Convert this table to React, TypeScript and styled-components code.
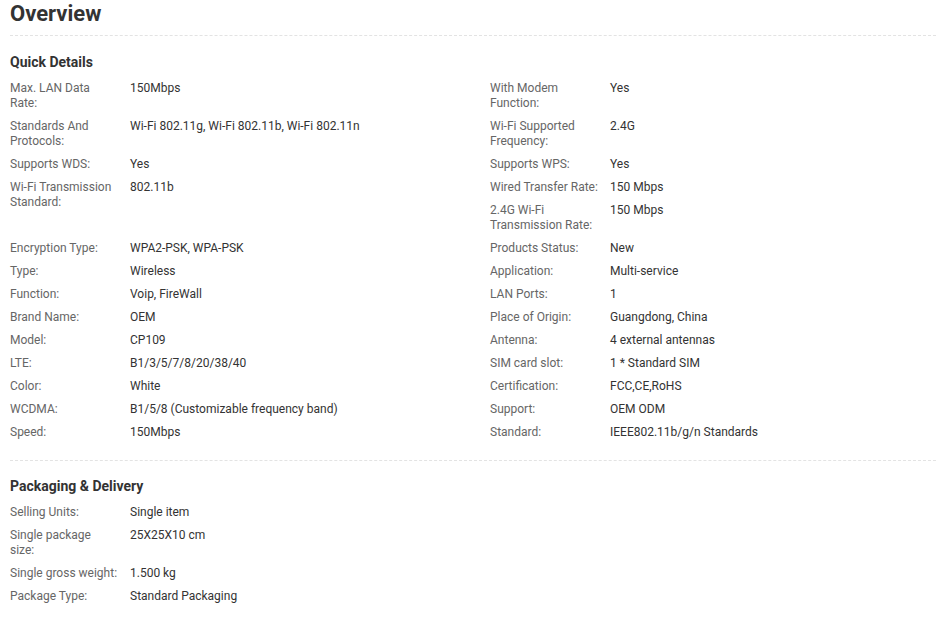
import React from 'react';
import styled, { createGlobalStyle } from 'styled-components';

const GlobalStyle = createGlobalStyle`
  html, body {
    margin: 0;
    padding: 0;
    background: #fff;
  }
  body {
    font-family: Roboto, "Liberation Sans", Arial, sans-serif;
    color: #333;
  }
`;

const Page = styled.div`
  width: 926px;
  padding-left: 10px;
`;

const Heading = styled.h1`
  margin: 0;
  height: 35px;
  line-height: 28px;
  font-size: 22px;
  font-weight: 700;
  color: #333;
  border-bottom: 1px dashed #e3e3e3;
`;

const Section = styled.div<{ last?: boolean }>`
  padding-top: ${props => (props.last ? '15px' : '16px')};
  padding-bottom: ${props => (props.last ? '0' : '12px')};
  border-bottom: ${props => (props.last ? 'none' : '1px dashed #e3e3e3')};
`;

const SectionTitle = styled.div`
  font-size: 14px;
  line-height: 20px;
  font-weight: 700;
  color: #333;
  margin-bottom: 9px;
`;

const Grid = styled.div`
  display: grid;
  grid-template-columns: 480px 1fr;
`;

const Cell = styled.div`
  display: flex;
  flex-direction: column;
`;

const Item = styled.div`
  display: flex;
  font-size: 12px;
  line-height: 15px;
  margin-bottom: 8px;
`;

const Label = styled.div`
  flex: 0 0 120px;
  color: #666;
  padding-right: 12px;
  box-sizing: border-box;
`;

const Value = styled.div`
  color: #333;
`;

type Attr = [string, string];

// each row: [left column items, right column items]
const quickRows: Attr[][][] = [
  [[['Max. LAN Data Rate:', '150Mbps']], [['With Modem Function:', 'Yes']]],
  [
    [['Standards And Protocols:', 'Wi-Fi 802.11g, Wi-Fi 802.11b, Wi-Fi 802.11n']],
    [['Wi-Fi Supported Frequency:', '2.4G']],
  ],
  [[['Supports WDS:', 'Yes']], [['Supports WPS:', 'Yes']]],
  [
    [['Wi-Fi Transmission Standard:', '802.11b']],
    [
      ['Wired Transfer Rate:', '150 Mbps'],
      ['2.4G Wi-Fi Transmission Rate:', '150 Mbps'],
    ],
  ],
  [[['Encryption Type:', 'WPA2-PSK, WPA-PSK']], [['Products Status:', 'New']]],
  [[['Type:', 'Wireless']], [['Application:', 'Multi-service']]],
  [[['Function:', 'Voip, FireWall']], [['LAN Ports:', '1']]],
  [[['Brand Name:', 'OEM']], [['Place of Origin:', 'Guangdong, China']]],
  [[['Model:', 'CP109']], [['Antenna:', '4 external antennas']]],
  [[['LTE:', 'B1/3/5/7/8/20/38/40']], [['SIM card slot:', '1 * Standard SIM']]],
  [[['Color:', 'White']], [['Certification:', 'FCC,CE,RoHS']]],
  [[['WCDMA:', 'B1/5/8 (Customizable frequency band)']], [['Support:', 'OEM ODM']]],
  [[['Speed:', '150Mbps']], [['Standard:', 'IEEE802.11b/g/n Standards']]],
];

const packaging: Attr[] = [
  ['Selling Units:', 'Single item'],
  ['Single package size:', '25X25X10 cm'],
  ['Single gross weight:', '1.500 kg'],
  ['Package Type:', 'Standard Packaging'],
];

const AttrItem: React.FC<{ attr: Attr }> = ({ attr }) => (
  <Item>
    <Label>{attr[0]}</Label>
    <Value>{attr[1]}</Value>
  </Item>
);

const App: React.FC = () => {
  return (
    <Page>
      <GlobalStyle />
      <Heading>Overview</Heading>
      <Section>
        <SectionTitle>Quick Details</SectionTitle>
        <Grid>
          {quickRows.map((row, i) =>
            row.map((cell, j) => (
              <Cell key={`${i}-${j}`}>
                {cell.map(attr => (
                  <AttrItem key={attr[0]} attr={attr} />
                ))}
              </Cell>
            )),
          )}
        </Grid>
      </Section>
      <Section last>
        <SectionTitle>Packaging &amp; Delivery</SectionTitle>
        <Cell>
          {packaging.map(attr => (
            <AttrItem key={attr[0]} attr={attr} />
          ))}
        </Cell>
      </Section>
    </Page>
  );
};

export default App;
